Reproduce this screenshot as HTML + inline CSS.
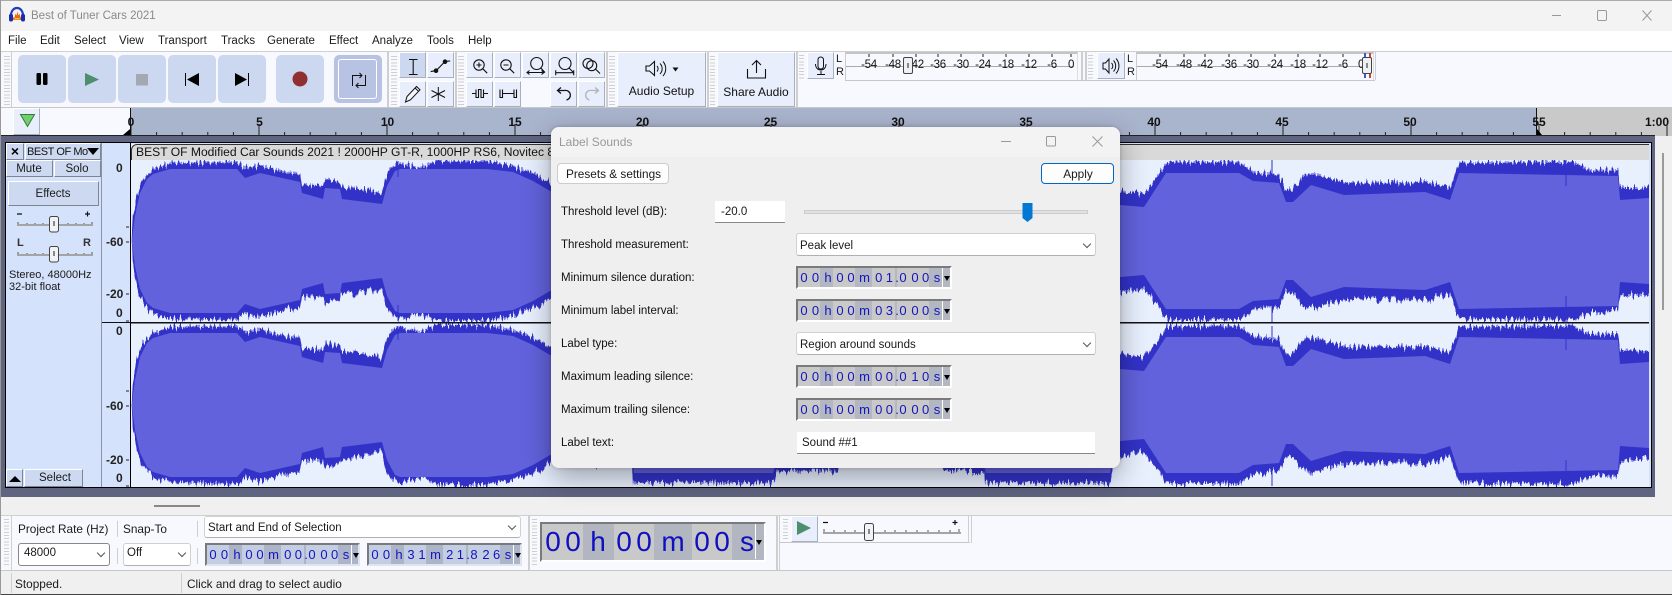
<!DOCTYPE html>
<html><head><meta charset="utf-8"><title>Best of Tuner Cars 2021</title>
<style>
html,body{margin:0;padding:0;background:#f0f0f0}
#r{position:relative;width:1672px;height:595px;overflow:hidden;background:#f3f3f3;font-family:"Liberation Sans",sans-serif;font-size:11.5px;color:#1a1a1a}
#r div,#r span,#r svg{position:absolute;box-sizing:border-box}
.t{white-space:nowrap;line-height:14px;height:14px}
.c{transform:translateX(-50%);text-align:center}
.g{background:repeating-linear-gradient(#cfcfcf 0 1px,transparent 1px 3.2px)}
.v{background:#cfcfcf}
.b{background:#e8eefb;border-bottom:1px solid #a9b0bd;border-right:1px solid #a9b0bd;border-top:1px solid #fff;border-left:1px solid #fff}
.tb{background:#cbd8ef;border-radius:5px}
.rl{font-weight:bold;font-size:12px;color:#111;top:115px}
.ml{font-size:11.5px;color:#111;top:58px;letter-spacing:-.3px}
.cb{background:#ccd9f0;border-top:1px solid #fff;border-left:1px solid #fff;border-right:1px solid #7f8590;border-bottom:1px solid #7f8590}
.vr{font-weight:bold;font-size:12px;color:#222}
.lb{left:561px;font-size:11.5px;color:#111}
.dd{background:#fff;border:1px solid #d0d0d0;border-bottom:1px solid #b0b0b0;border-radius:3px}
.ch{width:6px;height:6px;border-right:1px solid #555;border-bottom:1px solid #555;transform:rotate(45deg)}
.tc{width:156px;height:23px;border-top:2px solid #7a7a7a;border-left:2px solid #7a7a7a;border-right:2px solid #fff;border-bottom:2px solid #fff;background:linear-gradient(90deg,#c9c9c9 0 22px,#b3b7c2 22px 35px,#c9c9c9 35px 57px,#b3b7c2 57px 74px,#c9c9c9 74px 97px,#b3b7c2 97px 99px,#c9c9c9 99px 131px,#b3b7c2 131px 152px)}
.tc.bl{background:linear-gradient(90deg,#c4cee2 0 22px,#abb4c9 22px 35px,#c4cee2 35px 57px,#abb4c9 57px 74px,#c4cee2 74px 97px,#abb4c9 97px 99px,#c4cee2 99px 131px,#abb4c9 131px 152px);border-right-color:#e0e4ee;border-bottom-color:#e0e4ee}
.tc span{top:3px;width:12px;text-align:center;font-size:13px;line-height:14px;color:#1414c0}
.tc .w{left:144px;top:0;width:1px;height:19px;background:#fff}
.tc .a{left:146px;top:8px;width:0;height:0;border-left:3.5px solid transparent;border-right:3.5px solid transparent;border-top:5px solid #000}
.a1{left:0px}.a2{left:11.5px}.a3{left:24px}.a4{left:36px}.a5{left:47px}.a6{left:60.5px}.a7{left:74.7px}.a8{left:85.4px}.a9{left:93px}.a10{left:99px}.a11{left:111px}.a12{left:121.6px}.a13{left:133px}
.bt{font-size:28px;color:#1010c0;top:527px;line-height:30px;height:30px;white-space:nowrap}
</style></head><body>
<div id="r">
<!-- title -->
<div style="left:0;top:0;width:1672px;height:31px;background:#f3f3f3;border-top:1px solid #aaa"></div>
<div class="t" style="left:31px;top:9px;color:#8a8a8a;font-size:11.5px">Best of Tuner Cars 2021</div>
<!-- menu -->
<div style="left:0;top:31px;width:1672px;height:20px;background:#fff"></div>
<div class="t" style="left:8px;top:34px">File</div>
<div class="t" style="left:40px;top:34px">Edit</div>
<div class="t" style="left:74px;top:34px">Select</div>
<div class="t" style="left:119px;top:34px">View</div>
<div class="t" style="left:158px;top:34px">Transport</div>
<div class="t" style="left:221px;top:34px">Tracks</div>
<div class="t" style="left:267px;top:34px">Generate</div>
<div class="t" style="left:329px;top:34px">Effect</div>
<div class="t" style="left:372px;top:34px">Analyze</div>
<div class="t" style="left:427px;top:34px">Tools</div>
<div class="t" style="left:468px;top:34px">Help</div>
<!-- toolbar -->
<div style="left:0;top:51px;width:1672px;height:57px;background:#f8f9fe;border-top:1px solid #cfcfcf;border-bottom:1px solid #c8c8c8"></div>
<div class="v" style="left:11px;top:52px;width:1px;height:55px"></div>
<div class="g" style="left:4px;top:56px;width:6px;height:50px"></div>
<div class="tb" style="left:18px;top:55px;width:48px;height:48px"></div>
<div class="tb" style="left:68px;top:55px;width:48px;height:48px"></div>
<div class="tb" style="left:118px;top:55px;width:48px;height:48px"></div>
<div class="tb" style="left:168px;top:55px;width:48px;height:48px"></div>
<div class="tb" style="left:218px;top:55px;width:48px;height:48px"></div>
<div class="tb" style="left:276px;top:55px;width:48px;height:48px"></div>
<div class="tb" style="left:334px;top:55px;width:48px;height:48px;background:#b8c3e3"></div>
<div style="left:338px;top:59px;width:39px;height:40px;border:1px solid #fff;border-radius:3px"></div>
<div class="v" style="left:387px;top:52px;width:2px;height:55px"></div>
<div class="g" style="left:391px;top:56px;width:6px;height:50px"></div>
<div class="b" style="left:399px;top:52px;width:27px;height:26px;background:#ccd8ef"></div>
<div class="b" style="left:427px;top:52px;width:27px;height:26px"></div>
<div class="b" style="left:399px;top:81px;width:27px;height:26px"></div>
<div class="b" style="left:427px;top:81px;width:27px;height:26px"></div>
<div class="v" style="left:455px;top:52px;width:2px;height:55px"></div>
<div class="g" style="left:458px;top:56px;width:6px;height:50px"></div>
<div class="b" style="left:466px;top:52px;width:27px;height:26px"></div>
<div class="b" style="left:494px;top:52px;width:27px;height:26px"></div>
<div class="b" style="left:522px;top:52px;width:27px;height:26px"></div>
<div class="b" style="left:550px;top:52px;width:27px;height:26px"></div>
<div class="b" style="left:578px;top:52px;width:27px;height:26px"></div>
<div class="b" style="left:466px;top:81px;width:27px;height:26px"></div>
<div class="b" style="left:494px;top:81px;width:27px;height:26px"></div>
<div class="b" style="left:550px;top:81px;width:27px;height:26px"></div>
<div class="b" style="left:578px;top:81px;width:27px;height:26px"></div>
<div class="v" style="left:606px;top:52px;width:2px;height:55px"></div>
<div class="g" style="left:609px;top:56px;width:6px;height:50px"></div>
<div class="b" style="left:617px;top:52px;width:89px;height:55px"></div>
<div class="t c" style="left:661.5px;top:84px;font-size:12px;color:#111">Audio Setup</div>
<div class="v" style="left:707px;top:52px;width:2px;height:55px"></div>
<div class="g" style="left:710px;top:56px;width:5px;height:50px"></div>
<div class="b" style="left:717px;top:52px;width:78px;height:55px"></div>
<div class="t c" style="left:756px;top:85px;font-size:12px;color:#111">Share Audio</div>
<div class="v" style="left:796px;top:52px;width:2px;height:55px"></div>
<div class="g" style="left:799px;top:55px;width:5px;height:24px"></div>
<div class="b" style="left:807px;top:52px;width:27px;height:27px"></div>
<div class="t" style="left:836px;top:52px;font-size:11px">L</div>
<div class="t" style="left:836px;top:65px;font-size:11px">R</div>
<div style="left:845px;top:52px;width:233px;height:28px;border-left:1px solid #ccc;border-right:1px solid #ddd;border-top:2px solid #c4c4c4"></div>
<div style="left:845px;top:80px;width:530px;height:1px;background:#c8c8c8"></div>
<div style="left:846px;top:66px;width:228px;height:1px;background:#aaa"></div>
<span class="t c ml" style="left:869px">-54</span><span class="t c ml" style="left:893px">-48</span><span class="t c ml" style="left:916px">-42</span><span class="t c ml" style="left:938px">-36</span><span class="t c ml" style="left:961px">-30</span><span class="t c ml" style="left:983px">-24</span><span class="t c ml" style="left:1006px">-18</span><span class="t c ml" style="left:1029px">-12</span><span class="t c ml" style="left:1052px">-6</span><span class="t c ml" style="left:1071px">0</span>
<div style="left:903px;top:57px;width:10px;height:17px;background:#eef0f4;border:1px solid #444;border-radius:2px"></div>
<div style="left:907px;top:63px;width:2px;height:5px;background:#888"></div>
<div class="v" style="left:1081px;top:52px;width:2px;height:28px"></div>
<div class="v" style="left:1085px;top:52px;width:2px;height:28px"></div>
<div class="g" style="left:1088px;top:55px;width:5px;height:24px"></div>
<div class="b" style="left:1097px;top:52px;width:28px;height:27px"></div>
<div class="t" style="left:1127px;top:52px;font-size:11px">L</div>
<div class="t" style="left:1127px;top:65px;font-size:11px">R</div>
<div style="left:1136px;top:52px;width:238px;height:28px;border-left:1px solid #ccc;border-right:1px solid #ddd;border-top:2px solid #c4c4c4"></div>
<div style="left:1137px;top:66px;width:232px;height:1px;background:#aaa"></div>
<span class="t c ml" style="left:1160px">-54</span><span class="t c ml" style="left:1184px">-48</span><span class="t c ml" style="left:1205px">-42</span><span class="t c ml" style="left:1229px">-36</span><span class="t c ml" style="left:1251px">-30</span><span class="t c ml" style="left:1275px">-24</span><span class="t c ml" style="left:1298px">-18</span><span class="t c ml" style="left:1320px">-12</span><span class="t c ml" style="left:1343px">-6</span><span class="t c ml" style="left:1361px">0</span>
<div style="left:1364px;top:53px;width:1.5px;height:25px;background:#3a5ad0"></div>
<div style="left:1369px;top:53px;width:1.5px;height:25px;background:#d04040"></div>
<div style="left:1362px;top:57px;width:10px;height:17px;background:#eef0f4;border:1px solid #444;border-radius:2px"></div>
<div style="left:1366px;top:63px;width:2px;height:5px;background:#888"></div>
<div class="v" style="left:1375px;top:52px;width:1px;height:28px"></div>
<!-- ruler -->
<div style="left:0;top:108px;width:130px;height:28px;background:#f8f9fe"></div>
<div class="b" style="left:13px;top:108px;width:27px;height:27px"></div>
<div style="left:130px;top:108px;width:1407px;height:28px;background:#a9b4cd"></div>
<div style="left:1537px;top:108px;width:135px;height:28px;background:#c9c9c9"></div>
<span class="t c rl" style="left:131px">0</span><span class="t c rl" style="left:259.5px">5</span><span class="t c rl" style="left:387.5px">10</span><span class="t c rl" style="left:515px">15</span><span class="t c rl" style="left:642.5px">20</span><span class="t c rl" style="left:770.5px">25</span><span class="t c rl" style="left:898px">30</span><span class="t c rl" style="left:1026px">35</span><span class="t c rl" style="left:1154px">40</span><span class="t c rl" style="left:1282px">45</span><span class="t c rl" style="left:1410px">50</span><span class="t c rl" style="left:1539px">55</span><span class="t c rl" style="left:1657px">1:00</span>
<!-- panel -->
<div style="left:0;top:135px;width:1655px;height:362px;background:#5f6481;border-top:1px solid #222"></div>
<div style="left:5px;top:142px;width:1647px;height:346px;border:1.5px solid #000;background:#d5e2fb"></div>
<div style="left:1655px;top:136px;width:17px;height:361px;background:#f0f0f0"></div>
<div style="left:1662px;top:153px;width:2px;height:157px;background:#9a9a9a"></div>
<div style="left:6px;top:143px;width:18px;height:17px" class="cb"></div>
<div style="left:25px;top:143px;width:76px;height:17px" class="cb"></div>
<div class="t" style="left:27px;top:145px;font-size:11px;letter-spacing:-.45px;width:62px;overflow:hidden;color:#111">BEST OF Mo</div>
<div style="left:87px;top:148px;width:0;height:0;border-left:6px solid transparent;border-right:6px solid transparent;border-top:7px solid #000"></div>
<div class="t c" style="left:15px;top:144px;font-size:14px;font-weight:bold;color:#000">×</div>
<div class="cb" style="left:6px;top:160px;width:47px;height:17px"></div>
<div class="cb" style="left:54px;top:160px;width:47px;height:17px"></div>
<div class="t c" style="left:29px;top:162px">Mute</div>
<div class="t c" style="left:77px;top:162px">Solo</div>
<div class="cb" style="left:8px;top:181px;width:91px;height:25px"></div>
<div class="t c" style="left:53px;top:187px">Effects</div>
<div style="left:101px;top:143px;width:1px;height:344px;background:#8c93a6"></div>
<div class="t" style="left:9px;top:268px;font-size:11px">Stereo, 48000Hz</div>
<div class="t" style="left:9px;top:280px;font-size:11px">32-bit float</div>
<div class="cb" style="left:6px;top:469px;width:17px;height:18px"></div>
<div style="left:9px;top:476px;width:0;height:0;border-left:6px solid transparent;border-right:6px solid transparent;border-bottom:6px solid #000"></div>
<div class="cb" style="left:24px;top:469px;width:59px;height:18px"></div>
<div class="t c" style="left:55px;top:471px">Select</div>
<span class="t vr" style="left:116px;top:161px">0</span><span class="t vr" style="left:106px;top:235px">-60</span><span class="t vr" style="left:106px;top:287px">-20</span><span class="t vr" style="left:116px;top:306px">0</span><span class="t vr" style="left:116px;top:324px">0</span><span class="t vr" style="left:106px;top:399px">-60</span><span class="t vr" style="left:106px;top:453px">-20</span><span class="t vr" style="left:116px;top:471px">0</span>
<!-- wave -->
<div style="left:130px;top:143px;width:1px;height:344px;background:#000"></div>
<div style="left:131px;top:144px;width:1518px;height:343px;background:#e8f0fe"></div>
<div style="left:131px;top:144px;width:1518px;height:16px;background:#d9d9d9;border-top-left-radius:6px;border-top:1px solid #333;border-left:1px solid #333"></div>
<div class="t" style="left:136px;top:145px;font-size:12.1px;color:#111">BEST OF Modified Car Sounds 2021 ! 2000HP GT-R, 1000HP RS6, Novitec 8</div>
<svg style="left:0;top:0" width="1672" height="595" viewBox="0 0 1672 595">
<defs>
<filter id="j" filterUnits="userSpaceOnUse" x="120" y="150" width="1535" height="345" color-interpolation-filters="sRGB">
<feTurbulence type="fractalNoise" baseFrequency=".5 .012" numOctaves="2" seed="4" result="n"/>
<feColorMatrix in="n" type="matrix" values="1 0 0 0 0  0 0 0 0 .5  0 0 0 0 0  0 0 0 0 1" result="m"/>
<feDisplacementMap in="SourceGraphic" in2="m" scale="16" xChannelSelector="G" yChannelSelector="R"/>
</filter>
<clipPath id="wc"><rect x="131" y="160" width="1518" height="327"/></clipPath>
<polygon id="o" points="131.7,0 132.7,-22 136.7,-45 143,-62 153,-72 170,-78 237,-79 245,-73 260,-76 280,-70 300,-67 302,-57 323,-55 325,-62 340,-59 341,-54 360,-52 382,-48 385,-62 390,-73 397,-77 399,-78 420,-73 437,-80 487,-80 513,-75 533,-68 550,-58 632,-58 633,-78 773,-78 777,-66 838,-66 840,-56 942,-56 943,-66 984,-66 985,-78 1110,-78 1113,-60 1120,-51 1144,-48 1155,-61 1167.5,-79 1239,-79 1253,-69 1279,-66 1286,-51 1293,-51 1302,-64 1311,-68 1344,-59 1348,-58 1425,-59 1450,-53 1459,-78 1538,-79 1574,-79 1589,-71 1618,-71 1620,-54 1649,-54 1649,0"/>
<polygon id="i" points="131.7,0 135,-25 140,-48 147,-62 153,-67 170,-72 237,-72 245,-63 260,-68 300,-59 302,-48 323,-42 325,-53 340,-52 342,-42 382,-37 387,-55 395,-70 400,-72 487,-72 513,-69 533,-60 550,-50 632,-50 634,-68 773,-68 777,-55 940,-55 944,-58 984,-60 986,-68 1110,-68 1114,-48 1120,-36 1144,-34 1166,-68 1239,-68 1253,-60 1279,-58 1286,-39 1293,-39 1311,-56 1344,-46 1425,-49 1450,-41 1459,-68 1618,-65 1620,-41 1649,-43 1649,0"/>
<pattern id="tk" x="130.5" y="132" width="25.6" height="4" patternUnits="userSpaceOnUse"><rect x="0" y="0" width="1" height="4" fill="#222"/></pattern>
<pattern id="tM" x="130.5" y="124" width="128" height="12" patternUnits="userSpaceOnUse"><rect x="0" y="0" width="1" height="12" fill="#222"/></pattern>
</defs>
<g clip-path="url(#wc)">
<g filter="url(#j)" fill="#3232c8">
<use href="#o" transform="translate(0,241)"/><use href="#o" transform="translate(0,241) scale(1,-1)"/>
<use href="#o" transform="translate(0,405)"/><use href="#o" transform="translate(0,405) scale(1,-1)"/>
</g>
<g fill="#6262dc">
<use href="#i" transform="translate(0,241)"/><use href="#i" transform="translate(0,241) scale(1,-1)"/>
<use href="#i" transform="translate(0,405)"/><use href="#i" transform="translate(0,405) scale(1,-1)"/>
</g>
<path d="M398 161v16M398 305v16M1272 160v16M1566 160v26M1566 296v26M1272 306v16M398 326v14M1272 326v14M1566 324v26M1566 460v26M1272 470v16" stroke="#3232c8" stroke-width="1"/>
</g>
<rect x="131" y="322" width="1518" height="1.5" fill="#111"/>
<rect x="102" y="322" width="29" height="1" fill="#111"/>
<path d="M126 227h3M126 242h3M126 294h3M126 321h3M126 391h3M126 406h3M126 460h3M126 486h3" stroke="#222"/>
<rect x="130" y="132" width="1542" height="4" fill="url(#tk)"/>
<rect x="130" y="124" width="1542" height="12" fill="url(#tM)"/>
<path d="M130.5 108V135M1536.5 108V135" stroke="#111"/>
<path d="M123 135l7-6v6zM1537 129l5 6h-5z" fill="#000"/>
<!-- meter ticks -->
<path d="M869 54v3M893 54v3M916 54v3M938 54v3M961 54v3M983 54v3M1006 54v3M1029 54v3M1052 54v3M1071 54v3M1160 54v3M1184 54v3M1205 54v3M1229 54v3M1251 54v3M1275 54v3M1298 54v3M1320 54v3M1343 54v3" stroke="#222"/>
<!-- logo -->
<path d="M11 17C10 5 24 5 23 17" fill="none" stroke="#2438c8" stroke-width="2.2"/>
<rect x="9" y="14" width="4" height="7.500" rx="1.700" fill="#1a2cb0"/><rect x="21" y="14" width="4" height="7.500" rx="1.700" fill="#1a2cb0"/>
<path d="M13 17.500h1.500l1-4 1 2 1-4 1 4 1-2 1 4H21v2.500H13z" fill="#e8691a"/><path d="M14.500 18h5v1.500h-5z" fill="#f3c431"/>
<!-- window ctrls -->
<path d="M1552 15.500h9" stroke="#999" stroke-width="1"/><rect x="1597.500" y="10.500" width="9" height="10" rx="1.500" fill="none" stroke="#999"/><path d="M1642.500 10.500l9 10M1651.500 10.500l-9 10" stroke="#999"/>
<!-- transport -->
<rect x="36.500" y="73" width="4.500" height="12" rx="1.200" fill="#000"/><rect x="43" y="73" width="4.500" height="12" rx="1.200" fill="#000"/>
<path d="M85 73l14 6.500-14 6.500z" fill="#4c8e6e"/>
<rect x="136" y="74" width="12" height="11.500" fill="#a3a8b3"/>
<path d="M199 73v13l-12-6.500z" fill="#000"/><rect x="185" y="73" width="1" height="13" fill="#000"/>
<path d="M235 73v13l12-6.500z" fill="#000"/><rect x="248" y="73" width="1" height="13" fill="#000"/>
<circle cx="300" cy="79" r="7.500" fill="#8f2f2f"/>
<path d="M352.500 86V75.500H362M359.500 73l2.500 2.500-2.500 2.500M365.500 75V85.500H356M358.500 83l-2.500 2.500 2.500 2.500" fill="none" stroke="#111" stroke-width="1"/>
<!-- tools -->
<path d="M409 59.500h8.500M409 74.500h8.500M413.200 59.500v15" fill="none" stroke="#111" stroke-width="1.100"/>
<path d="M430.700 71.600l5.500-1 9-9.300 5-.3" fill="none" stroke="#111" stroke-width="1.100"/><circle cx="436" cy="70.700" r="2.300" fill="#111"/><circle cx="445" cy="61.700" r="2.300" fill="#111"/>
<path d="M405.500 102l1.500-5.500 9.500-10 3.500 3.300-9.500 10zM415 88l3.500 3.300" fill="#f3f5fc" stroke="#111" stroke-width="1"/>
<path d="M438.300 87v14M431.500 90.500l13.500 7M445 90.500l-13.500 7" fill="none" stroke="#111" stroke-width="1"/>
<!-- zoom -->
<g fill="none" stroke="#111" stroke-width="1.100">
<circle cx="479" cy="65" r="5.200"/><path d="M482.700 68.700l4.500 4.500M476.500 65h5M479 62.500v5"/>
<circle cx="506" cy="65" r="5.200"/><path d="M509.700 68.700l4.500 4.500M503.500 65h5"/>
<circle cx="536.700" cy="63.500" r="6"/><path d="M540.800 68l4.200 4.500M527 72.500h17M529.500 70.500l-2.500 2 2.500 2M541.500 70.500l2.500 2-2.500 2"/>
<circle cx="565" cy="63.500" r="6"/><path d="M569 68l4 4M555.700 72.700h18M555.700 70.200v5M573.700 70.200v5"/>
<circle cx="588" cy="63.500" r="5"/><circle cx="591.700" cy="65.700" r="5"/><path d="M595.500 69l4.500 4.500"/>
<path d="M472 93.500h4M476 89.500v8h2.500v-8h2.500v8h2.500v-8M483.500 93.500h4.500"/>
<path d="M500 89.500v8h2.500v-8M514 89.500v8h2.500v-8M502.500 93.500h11.500"/>
<path d="M561 87.500l-3.500 3 3.500 3M558 90.500h6.500a4.800 4.800 0 0 1 2 9.500" stroke-width="1.300"/>
<path d="M595 87.500l3.500 3-3.500 3M598 90.500h-6.500a4.800 4.800 0 0 0-2 9.500" stroke="#b0b3b8" stroke-width="1.300"/>
</g>
<!-- audio setup/share -->
<path d="M646 66h3.500l5-4.500v14l-5-4.500H646z" fill="none" stroke="#111" stroke-width="1.100"/>
<path d="M657 66a4 4 0 0 1 0 5.500M660 63.500a7.500 7.500 0 0 1 0 10.500M663 61.500a11 11 0 0 1 0 14.500" fill="none" stroke="#111"/>
<path d="M672.500 67.500h6l-3 4z" fill="#111"/>
<path d="M747.500 69v9h18v-9M756.500 73V60.500M752 65l4.500-4.500 4.500 4.500" fill="none" stroke="#111" stroke-width="1.100"/>
<!-- mic + speaker -->
<rect x="818" y="57" width="5.500" height="12" rx="2.700" fill="none" stroke="#111"/><path d="M815.500 64c0 8 10.500 8 10.500 0M821 71v3M817 74.500h8" fill="none" stroke="#111"/>
<path d="M1103 63h2.500l3.500-4v14l-3.500-4H1103zM1111.500 63a4 4 0 0 1 0 6M1113.500 60.500a8 8 0 0 1 0 11M1116 58.500a11 11 0 0 1 0 15" fill="none" stroke="#111"/>
<!-- green triangle -->
<path d="M20.500 114.500h14l-7 12z" fill="#6fd06f" stroke="#3b7a3b"/>
<!-- track sliders -->
<g>
<path d="M17 225h76M17 255h76" stroke="#a4a4a4" stroke-width="2"/>
<path d="M18 222v2M27 223v1M35 223v1M43 223v1M68 223v1M76 223v1M84 223v1M92 222v2M18 252v2M27 253v1M35 253v1M43 253v1M68 253v1M76 253v1M84 253v1M92 252v2" stroke="#555"/>
<path d="M17 214h5M85 214h5M87.500 211.500v5" stroke="#111" stroke-width="1.200"/>
<rect x="49.500" y="216.500" width="9" height="15.500" rx="2" fill="#f0f2f6" stroke="#444"/><rect x="53" y="221" width="2" height="5" fill="#888"/>
<rect x="49.500" y="246.500" width="9" height="15.500" rx="2" fill="#f0f2f6" stroke="#444"/><rect x="53" y="251" width="2" height="5" fill="#888"/>
</g>
</svg>
<span class="t" style="left:17px;top:236px;font-size:11px;font-weight:bold;color:#333">L</span>
<span class="t" style="left:83px;top:236px;font-size:11px;font-weight:bold;color:#333">R</span>
<!-- bottom band -->
<div style="left:0;top:497px;width:1672px;height:18px;background:#f0f0f0"></div>
<div style="left:154px;top:505px;width:46px;height:2px;background:#888"></div>
<div style="left:0;top:515px;width:1672px;height:56px;background:#f8f9fe;border-top:1px solid #cfcfcf;border-bottom:1px solid #c8c8c8"></div>
<div class="g" style="left:4px;top:519px;width:5px;height:48px"></div>
<div class="v" style="left:11px;top:516px;width:1px;height:54px"></div>
<div class="t" style="left:18px;top:522px;font-size:11.8px">Project Rate (Hz)</div>
<div class="v" style="left:116.500px;top:521px;width:1px;height:16px"></div>
<div class="t" style="left:123px;top:522px;font-size:11.8px">Snap-To</div>
<div class="v" style="left:197px;top:521px;width:1px;height:16px"></div>
<div class="dd" style="left:204px;top:516px;width:317px;height:22px"></div>
<div class="t" style="left:208px;top:521px">Start and End of Selection</div>
<div class="ch" style="left:509px;top:523px"></div>
<div class="dd" style="left:18px;top:543px;width:92px;height:23px;border:1px solid #888"></div>
<div class="t" style="left:24px;top:546px">48000</div>
<div class="ch" style="left:98px;top:550px"></div>
<div class="v" style="left:116.500px;top:548px;width:1px;height:16px"></div>
<div class="dd" style="left:123px;top:543px;width:68px;height:23px"></div>
<div class="t" style="left:127px;top:546px">Off</div>
<div class="ch" style="left:179px;top:550px"></div>
<div class="v" style="left:197px;top:548px;width:1px;height:16px"></div>
<div class="tc bl" style="left:205px;top:543px;width:155px"><span class="a1">0</span><span class="a2">0</span><span class="a3">h</span><span class="a4">0</span><span class="a5">0</span><span class="a6">m</span><span class="a7">0</span><span class="a8">0</span><span class="a9">.</span><span class="a10">0</span><span class="a11">0</span><span class="a12">0</span><span class="a13">s</span><div class="w"></div><div class="a"></div></div>
<div class="tc bl" style="left:367px;top:543px;width:155px"><span class="a1">0</span><span class="a2">0</span><span class="a3">h</span><span class="a4">3</span><span class="a5">1</span><span class="a6">m</span><span class="a7">2</span><span class="a8">1</span><span class="a9">.</span><span class="a10">8</span><span class="a11">2</span><span class="a12">6</span><span class="a13">s</span><div class="w"></div><div class="a"></div></div>
<div class="v" style="left:528px;top:516px;width:2px;height:54px"></div>
<div class="g" style="left:532px;top:519px;width:5px;height:48px"></div>
<div style="left:540px;top:522px;width:226px;height:40px;border-top:2px solid #7a7a7a;border-left:2px solid #7a7a7a;border-right:2px solid #fff;border-bottom:2px solid #fff;background:linear-gradient(90deg,#c9c9c9 0 41px,#b1b6c1 41px 72px,#c9c9c9 72px 112px,#b1b6c1 112px 150px,#c9c9c9 150px 190px,#b1b6c1 190px 222px)"></div>
<span class="bt c" style="left:553px">0</span><span class="bt c" style="left:573px">0</span><span class="bt c" style="left:598px">h</span><span class="bt c" style="left:624px">0</span><span class="bt c" style="left:644px">0</span><span class="bt c" style="left:673px">m</span><span class="bt c" style="left:702px">0</span><span class="bt c" style="left:722px">0</span><span class="bt c" style="left:747px">s</span>
<div style="left:755px;top:524px;width:1px;height:35px;background:#fff"></div>
<div style="left:756px;top:540px;width:0;height:0;border-left:3.500px solid transparent;border-right:3.500px solid transparent;border-top:5px solid #000"></div>
<div class="v" style="left:776px;top:516px;width:2px;height:54px"></div>
<div class="v" style="left:779px;top:516px;width:1px;height:54px"></div>
<div class="g" style="left:783px;top:519px;width:5px;height:22px"></div>
<div class="b" style="left:791px;top:516px;width:27px;height:26px"></div>
<div style="left:780px;top:542px;width:190px;height:1px;background:#c8c8c8"></div>
<div class="v" style="left:968px;top:516px;width:1px;height:27px"></div>
<div class="v" style="left:971px;top:516px;width:1px;height:27px"></div>
<svg style="left:0;top:0" width="1672" height="595" viewBox="0 0 1672 595">
<path d="M797 521l14 7-14 7z" fill="#4c8e6e"/>
<path d="M823 533h138" stroke="#a4a4a4" stroke-width="2"/>
<path d="M824 529v3M834 530v2M845 530v2M855 530v2M885 530v2M895 530v2M906 530v2M917 530v2M928 530v2M939 530v2M950 530v2M959 529v3" stroke="#555"/>
<path d="M823 522.500h5M952.500 522.500h5M955 520v5" stroke="#111" stroke-width="1.200"/>
<rect x="864.500" y="523.500" width="9" height="17" rx="2" fill="#f0f2f6" stroke="#444"/><rect x="868" y="529" width="2" height="5" fill="#888"/>
</svg>
<!-- status -->
<div style="left:0;top:571px;width:1672px;height:24px;background:#f0f0f0;border-bottom:1px solid #444"></div>
<div class="v" style="left:11px;top:573px;width:1px;height:20px"></div>
<div class="v" style="left:181px;top:573px;width:1px;height:20px"></div>
<div class="t" style="left:15px;top:577px;font-size:11.800px">Stopped.</div>
<div class="t" style="left:187px;top:577px;font-size:11.800px">Click and drag to select audio</div>
<div style="left:0;top:0;width:1px;height:595px;background:#999"></div>
<!-- dialog -->
<div style="left:551px;top:127px;width:569px;height:341px;background:#efefef;border-radius:8px;box-shadow:0 10px 28px rgba(0,0,0,.33),0 0 4px rgba(0,0,0,.2)"></div>
<div style="left:551px;top:127px;width:569px;height:30px;background:#f3f3f3;border-radius:8px 8px 0 0"></div>
<div class="t" style="left:559px;top:135px;color:#999;font-size:12px">Label Sounds</div>
<svg style="left:0;top:0" width="1672" height="595" viewBox="0 0 1672 595">
<path d="M1001 141.500h10" stroke="#999"/><rect x="1046.500" y="136.500" width="9" height="9.500" rx="1" fill="none" stroke="#999"/><path d="M1092.500 136.500l10 10M1102.500 136.500l-10 10" stroke="#999"/>
</svg>
<div style="left:557px;top:163px;width:112px;height:21px;background:#fdfdfd;border:1px solid #ccc;border-radius:4px"></div>
<div class="t" style="left:566px;top:167px;font-size:11.800px">Presets &amp; settings</div>
<div style="left:1041px;top:163px;width:73px;height:21px;background:#fdfdfd;border:1.500px solid #0067c0;border-radius:4px"></div>
<div class="t c" style="left:1078px;top:167px;font-size:11.800px">Apply</div>
<div class="t lb" style="top:205px">Threshold level (dB):</div>
<div style="left:715px;top:201px;width:70px;height:22px;background:#fff;border-bottom:1px solid #888"></div>
<div class="t" style="left:721px;top:205px">-20.0</div>
<div style="left:804px;top:210px;width:284px;height:4px;background:#e0e2e2;border:1px solid #ccc"></div>
<svg style="left:0;top:0" width="1672" height="595" viewBox="0 0 1672 595"><path d="M1022.500 203h10v15l-5 4-5-4z" fill="#0078d4"/></svg>
<div class="t lb" style="top:238px">Threshold measurement:</div>
<div class="dd" style="left:796px;top:233px;width:300px;height:23px"></div>
<div class="t" style="left:800px;top:239px">Peak level</div>
<div class="ch" style="left:1084px;top:241px"></div>
<div class="t lb" style="top:271px">Minimum silence duration:</div>
<div class="tc" style="left:796px;top:266px"><span class="a1">0</span><span class="a2">0</span><span class="a3">h</span><span class="a4">0</span><span class="a5">0</span><span class="a6">m</span><span class="a7">0</span><span class="a8">1</span><span class="a9">.</span><span class="a10">0</span><span class="a11">0</span><span class="a12">0</span><span class="a13">s</span><div class="w"></div><div class="a"></div></div>
<div class="t lb" style="top:304px">Minimum label interval:</div>
<div class="tc" style="left:796px;top:299px"><span class="a1">0</span><span class="a2">0</span><span class="a3">h</span><span class="a4">0</span><span class="a5">0</span><span class="a6">m</span><span class="a7">0</span><span class="a8">3</span><span class="a9">.</span><span class="a10">0</span><span class="a11">0</span><span class="a12">0</span><span class="a13">s</span><div class="w"></div><div class="a"></div></div>
<div class="t lb" style="top:337px">Label type:</div>
<div class="dd" style="left:796px;top:332px;width:300px;height:23px"></div>
<div class="t" style="left:800px;top:338px">Region around sounds</div>
<div class="ch" style="left:1084px;top:340px"></div>
<div class="t lb" style="top:370px">Maximum leading silence:</div>
<div class="tc" style="left:796px;top:365px"><span class="a1">0</span><span class="a2">0</span><span class="a3">h</span><span class="a4">0</span><span class="a5">0</span><span class="a6">m</span><span class="a7">0</span><span class="a8">0</span><span class="a9">.</span><span class="a10">0</span><span class="a11">1</span><span class="a12">0</span><span class="a13">s</span><div class="w"></div><div class="a"></div></div>
<div class="t lb" style="top:403px">Maximum trailing silence:</div>
<div class="tc" style="left:796px;top:398px"><span class="a1">0</span><span class="a2">0</span><span class="a3">h</span><span class="a4">0</span><span class="a5">0</span><span class="a6">m</span><span class="a7">0</span><span class="a8">0</span><span class="a9">.</span><span class="a10">0</span><span class="a11">0</span><span class="a12">0</span><span class="a13">s</span><div class="w"></div><div class="a"></div></div>
<div class="t lb" style="top:436px">Label text:</div>
<div style="left:797px;top:432px;width:298px;height:22px;background:#fff;border-bottom:1px solid #888"></div>
<div class="t" style="left:802px;top:436px">Sound ##1</div>
</div>
</body></html>
